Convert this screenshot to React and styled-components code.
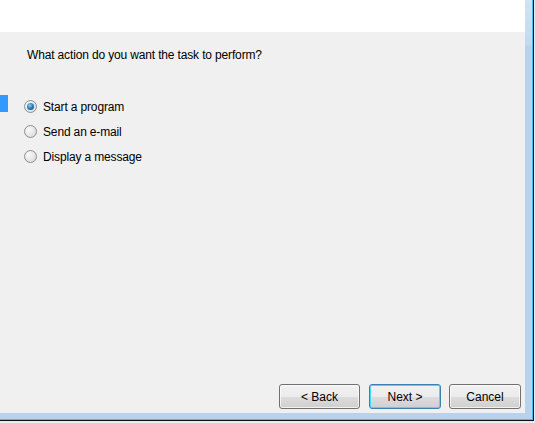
import React, { useState } from 'react';
import styled, { createGlobalStyle } from 'styled-components';

const GlobalStyle = createGlobalStyle`
  html, body {
    margin: 0;
    padding: 0;
    background: #e4ebf3;
  }
  body {
    font-family: "Liberation Sans", Arial, sans-serif;
    font-size: 12px;
    color: #000;
  }
`;

const Screen = styled.div`
  width: 535px;
  height: 423px;
  overflow: hidden;
  background: #e4ebf3;
`;

const Frame = styled.div`
  box-sizing: border-box;
  width: 534px;
  height: 421px;
  padding: 0 8px 7px 0;
  background: linear-gradient(to bottom, #d2e2f3 0, #c4d8ee 45px, #b9d1ea 46px, #b9d1ea 100%);
  border-right: 1px solid #0f0f0f;
  border-bottom: 1px solid #0f0f0f;
  box-shadow: inset -1px -1px 0 #43c2e6;
  display: flex;
`;

const Window = styled.div`
  width: 525px;
  height: 413px;
  display: flex;
  flex-direction: column;
  background: #f0f0f0;
`;

const Header = styled.div`
  height: 32px;
  flex: none;
  background: #fff;
`;

const Body = styled.div`
  flex: 1;
  display: flex;
  flex-direction: column;
  letter-spacing: -0.15px;
`;

const Question = styled.p`
  margin: 15px 0 0 27px;
  line-height: 16px;
`;

const Options = styled.div`
  display: flex;
  margin-top: 31px;
`;

const Indicator = styled.div`
  width: 8px;
  height: 17px;
  margin-top: 1px;
  background: #3399ff;
`;

const OptionList = styled.div`
  display: flex;
  flex-direction: column;
  margin-left: 16px;
`;

const OptionRow = styled.label`
  display: flex;
  align-items: center;
  height: 25px;
  gap: 6px;
  cursor: default;
`;

const Radio = styled.span`
  box-sizing: border-box;
  width: 13px;
  height: 13px;
  border-radius: 50%;
  border: 1px solid #8f8f8f;
  background: radial-gradient(circle at 35% 35%, #fafafa 0, #e6e6e6 55%, #d2d2d2 100%);
  display: flex;
  align-items: center;
  justify-content: center;

  &::after {
    content: '';
    width: 7px;
    height: 7px;
    border-radius: 50%;
    display: ${p => (p.$checked ? 'block' : 'none')};
    background: radial-gradient(circle at 40% 35%, #8fd3f7 0, #2b82c2 45%, #0d3f72 100%);
  }
`;

const Footer = styled.div`
  display: flex;
  justify-content: flex-end;
  padding: 0 4px 4px 0;
`;

const Button = styled.button`
  box-sizing: border-box;
  width: ${p => p.$w}px;
  height: 25px;
  margin-left: ${p => p.$gap}px;
  padding: 0;
  font-family: "Liberation Sans", Arial, sans-serif;
  font-size: 12px;
  color: #000;
  border-radius: 3px;
  border: 1px solid ${p => (p.$default ? '#3c7fb1' : '#707070')};
  background: linear-gradient(to bottom, #f2f2f2 0, #ebebeb 50%, #dddddd 51%, #cfcfcf 100%);
  box-shadow: inset 0 0 0 1px ${p => (p.$default ? '#48d8fb' : 'rgba(255,255,255,0.7)')};
`;

const options = ['Start a program', 'Send an e-mail', 'Display a message'];

export default function App() {
  const [selected, setSelected] = useState(0);
  return (
    <Screen>
      <GlobalStyle />
      <Frame>
        <Window>
          <Header />
          <Body>
            <Question>What action do you want the task to perform?</Question>
            <Options>
              <Indicator />
              <OptionList>
                {options.map((o, i) => (
                  <OptionRow key={o} onClick={() => setSelected(i)}>
                    <Radio $checked={selected === i} />
                    {o}
                  </OptionRow>
                ))}
              </OptionList>
            </Options>
          </Body>
          <Footer>
            <Button $w={81} $gap={0}>&lt; Back</Button>
            <Button $w={72} $gap={9} $default>Next &gt;</Button>
            <Button $w={72} $gap={8}>Cancel</Button>
          </Footer>
        </Window>
      </Frame>
    </Screen>
  );
}
